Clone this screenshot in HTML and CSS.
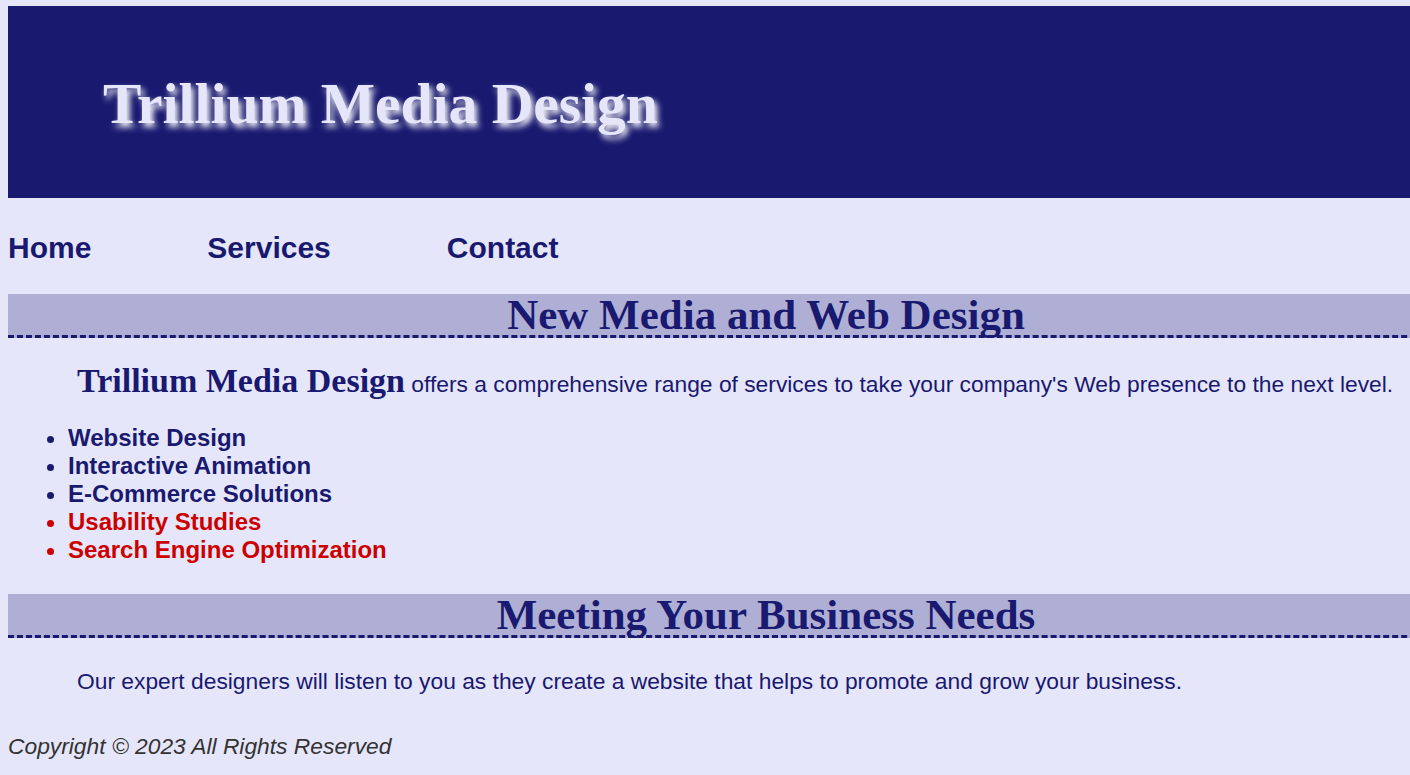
FILE: index.html
```html
<!DOCTYPE html>
<html lang="en">
<head>
<meta charset="utf-8">
<title>Trillium Media Design</title>
<link rel="stylesheet" href="styles.css">
</head>
<body>
<div class="page">
  <header class="site-header">
    <h1 class="site-title">Trillium Media Design</h1>
  </header>
  <nav class="site-nav">
    <a href="#">Home</a>
    <a href="#">Services</a>
    <a href="#">Contact</a>
  </nav>
  <main>
    <h2 class="band">New Media and Web Design</h2>
    <p class="intro"><span class="brand">Trillium Media Design</span> offers a comprehensive range of services to take your company's Web presence to the next level.</p>
    <ul class="services">
      <li>Website Design</li>
      <li>Interactive Animation</li>
      <li>E-Commerce Solutions</li>
      <li class="new">Usability Studies</li>
      <li class="new">Search Engine Optimization</li>
    </ul>
    <h2 class="band">Meeting Your Business Needs</h2>
    <p class="text">Our expert designers will listen to you as they create a website that helps to promote and grow your business.</p>
  </main>
  <footer class="site-footer">Copyright &copy; 2023 All Rights Reserved</footer>
</div>
</body>
</html>
```

FILE: styles.css
```css
html {
  overflow: hidden;
  background: #e6e6fa;
}

body {
  margin: 6px 0 0 8px;
  background: #e6e6fa;
  color: #191970;
  font-family: "Liberation Sans", Arial, sans-serif;
}

.page {
  width: 1516px;
}

.site-header {
  height: 192px;
  background: #191970;
  display: flex;
  align-items: center;
  padding-left: 95px;
  box-sizing: border-box;
}

.site-title {
  margin: 0;
  font-family: "Liberation Serif", "Times New Roman", serif;
  font-weight: bold;
  font-size: 57.5px;
  line-height: 1;
  color: #e6e6fa;
  text-shadow: 3px 4px 6px #ffffff;
  padding-top: 4px;
}

.site-nav {
  display: flex;
  gap: 116px;
  padding: 33px 0 30px;
}

.site-nav a {
  color: #191970;
  text-decoration: none;
  font-weight: bold;
  font-size: 30px;
  line-height: 33px;
}

.band {
  margin: 0;
  background: #afafd5;
  border-bottom: 3px dashed #191970;
  text-align: center;
  font-family: "Liberation Serif", "Times New Roman", serif;
  font-weight: bold;
  font-size: 43px;
  line-height: 41px;
  color: #191970;
}

.intro,
.text {
  margin: 0;
  text-indent: 69px;
  font-size: 22.8px;
}

.intro {
  padding-top: 24px;
}

.brand {
  font-family: "Liberation Serif", "Times New Roman", serif;
  font-weight: bold;
  font-size: 34px;
}

.services {
  margin: 24px 0 30px;
  padding-left: 60px;
  font-weight: bold;
  font-size: 24px;
  line-height: 28px;
}

.services .new {
  color: #cc0000;
}

.text {
  padding: 30px 0 0;
}

.site-footer {
  padding-top: 38px;
  font-style: italic;
  font-size: 22.8px;
  color: #333333;
}
```
